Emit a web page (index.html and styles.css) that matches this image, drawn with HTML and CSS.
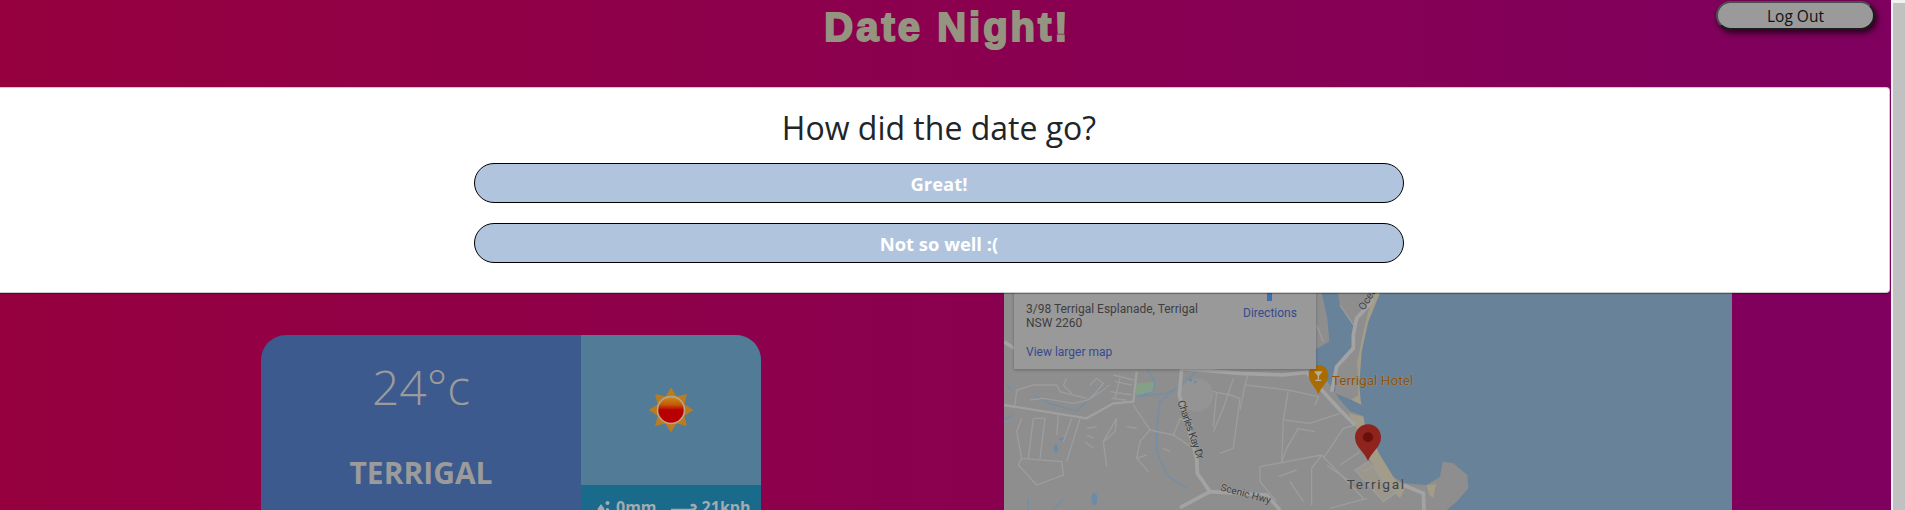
FILE: index.html
```html
<!DOCTYPE html>
<html lang="en">
<head>
  <meta charset="UTF-8" />
  <meta name="viewport" content="width=device-width, initial-scale=1" />
  <title>Date Night!</title>
  <link rel="stylesheet" href="styles.css">
</head>
<body>
  <div class="page">
    <header class="top">
      <h1>Date Night!</h1>
      <button class="logout" type="button">Log Out</button>
    </header>

    <main class="content">
      <section class="weather">
        <div class="weather-main">
          <div class="temp">24°c</div>
          <div class="place">TERRIGAL</div>
        </div>
        <div class="weather-side">
          <div class="sun-box">
            <svg class="sun" width="46" height="46" viewBox="-23 -23 46 46">
              <defs>
                <linearGradient id="sunFill" x1="0" y1="0" x2="0" y2="1">
                  <stop offset="0" stop-color="#c9901e" />
                  <stop offset="0.3" stop-color="#c65a08" />
                  <stop offset="0.5" stop-color="#b80000" />
                  <stop offset="1" stop-color="#b80000" />
                </linearGradient>
              </defs>
              <g fill="#b97c20">
                <path d="M-6.5 -12 L0 -22.5 L6.5 -12Z" />
                <path d="M-6.5 -12 L0 -22.5 L6.5 -12Z" transform="rotate(45)" />
                <path d="M-6.5 -12 L0 -22.5 L6.5 -12Z" transform="rotate(90)" />
                <path d="M-6.5 -12 L0 -22.5 L6.5 -12Z" transform="rotate(135)" />
                <path d="M-6.5 -12 L0 -22.5 L6.5 -12Z" transform="rotate(180)" />
                <path d="M-6.5 -12 L0 -22.5 L6.5 -12Z" transform="rotate(225)" />
                <path d="M-6.5 -12 L0 -22.5 L6.5 -12Z" transform="rotate(270)" />
                <path d="M-6.5 -12 L0 -22.5 L6.5 -12Z" transform="rotate(315)" />
              </g>
              <circle r="13.5" fill="url(#sunFill)" stroke="#b9a690" stroke-width="1.6" />
            </svg>
          </div>
          <div class="stats">
            <svg width="13" height="12" viewBox="0 0 13 12">
              <g fill="#a3abb0">
                <path d="M4 3 C6 6 7.5 7 7.5 9 A3.5 3 0 0 1 .5 9 C.5 7 2.5 5.5 4 3Z" />
                <circle cx="10.5" cy="2" r="2" />
                <circle cx="10.5" cy="8.5" r="1.6" />
              </g>
            </svg>
            <span>0mm</span>
            <svg class="wind" width="26" height="10" viewBox="0 0 26 10">
              <path d="M0 8 H19 C23 8 25 6.5 24.5 4.5 C24 2.8 21.5 2.6 20 4" fill="none" stroke="#a3abb0" stroke-width="2.6" />
            </svg>
            <span>21kph</span>
          </div>
        </div>
      </section>

      <section class="map">
        <svg width="728" height="225" viewBox="12 0 2184 675">
          <rect x="12" y="0" width="2184" height="675" fill="#8e8e8e" />
          <circle cx="590" cy="330" r="50" fill="#949494" />
          <path d="M405 295 L468 290 L455 325 L410 330Z" fill="#84a088" />

          <path class="sand" d="M1150 0 L1125 0 L1090 140 L1072 230 L1075 330 L1052 345 L1080 372 L1100 345 L1090 300 L1095 200 L1115 110Z" />
          <path class="sand" d="M1045 385 L1090 395 L1140 505 L1190 590 L1222 597 L1200 640 L1150 590 L1100 510 L1075 440Z" />
          <path class="sand" d="M1280 600 L1308 598 L1300 640 L1288 630Z" />
          <path class="sand-pale" d="M1065 555 L1105 530 L1185 625 L1150 650Z" />
          <path class="water" d="M1150 0 L1105 110 L1085 200 L1078 300 L1082 345 L1095 420 L1140 510 L1180 575 L1210 595 L1280 600 L1320 575 L1328 530 L1360 535 L1402 570 L1405 610 L1370 650 L1340 675 L2196 675 L2196 0Z" />
          <path class="water" d="M960 0 L982 100 L988 170 L948 192 L948 240 L990 300 L1020 345 L1050 378 L1095 395 L1085 360 L1055 345 L1005 325 L1010 240 L1055 185 L1065 130 L1020 60 L1010 0Z" />

          <g class="streams">
            <path d="M12 405 L40 390 M20 300 L40 320 M100 330 L150 355 L230 380 L290 320 L330 305" />
            <path d="M440 250 L465 290 L460 320 L410 335 L500 325 L530 310 L480 350 L470 430 L470 500 L500 570 L560 610" />
            <path d="M530 310 L590 260 M190 640 L160 675 M85 640 L85 675" />
          </g>
          <g fill="#6b8ba8">
            <ellipse cx="168" cy="490" rx="6" ry="12" />
            <ellipse cx="186" cy="463" rx="9" ry="4" />
            <ellipse cx="283" cy="642" rx="9" ry="19" />
            <circle cx="572" cy="285" r="5" />
            <circle cx="586" cy="291" r="4" />
          </g>

          <g class="roads-thin">
            <path d="M50 315 L100 300 L170 300 L180 320 L260 340 M50 315 L45 360 M90 345 L130 340 L220 355 L265 345 L330 300" />
            <path d="M200 280 L190 300 L215 325 M270 300 L290 280 L310 295 L290 320 L265 345" />
            <path d="M340 270 L400 285 M345 290 L395 300 M330 320 L395 330 M335 340 L380 345 M360 280 L345 340" />
            <path d="M65 400 L50 440 L65 520 L55 540 L110 600 L190 570 L185 530 L65 520 M100 400 L135 400 L120 520 M100 400 L85 520" />
            <path d="M175 390 L170 450 M215 400 L190 470 M240 400 L200 530 M260 430 L290 425 M260 450 L280 460 M255 470 L280 490" />
            <path d="M350 400 L310 470 L320 545 M350 400 L345 440 L310 470" />
            <path d="M400 360 L450 435 L420 470 L410 520 L445 560 M450 435 L520 450 L580 490 M380 425 L410 430 M410 520 L440 510 M490 490 L510 500 M520 450 L540 400 L580 420" />
            <path d="M640 320 L690 330 L720 340 M700 280 L670 370 L640 440 M650 320 L640 425 M720 340 L700 490 L660 505" />
            <path d="M745 265 L735 300 L865 315 L850 405 L930 415 L1020 385 M865 315 L955 335 L945 360 M735 300 L720 375 M850 405 L845 530" />
            <path d="M970 520 L1030 430 L1065 420 M965 510 L780 545 L780 590 L830 650 M965 510 L935 550 L935 660 M965 510 L1090 640" />
            <path d="M890 430 L945 440 M895 430 L860 490 L845 530 M890 555 L835 575 M870 590 L910 650 M1020 540 L1080 500 M980 540 L1050 590 M1100 640 L990 670" />
            <path d="M1020 60 L1060 120 M950 120 L970 170 M1120 440 L1085 500" />
            <path d="M1065 555 L1105 530 L1185 625 L1150 650Z M1090 560 L1120 545 L1165 610" />
          </g>
          <g class="roads">
            <path d="M540 250 L720 265 L850 270 L920 262 L970 320 L1020 375 L1065 420" />
            <path d="M1120 45 L1070 100 L1060 150 L1060 190 L1010 245 L995 320" />
            <path d="M545 250 L538 330 L590 520 L592 565 L630 620 L540 668 M630 620 L800 630 L840 675" />
            <path d="M1210 600 L1270 625 L1272 675" />
            <path d="M12 170 L42 190" />
          </g>
          <path class="road-mid" d="M12 360 L260 400 L340 355 L400 350 L410 260" />

          <text class="road-label" transform="translate(1092 78) rotate(-58)">Ocean</text>
          <text class="road-label" transform="translate(532 350) rotate(71)" textLength="185">Charles Kay Dr</text>
          <text class="road-label scenic" transform="translate(660 616) rotate(15)">Scenic Hwy</text>
          <text class="poi-label" x="995" y="299">Terrigal Hotel</text>
          <text class="town-label" x="1040" y="612">Terrigal</text>

          <path d="M955 240 C972 240 985 253 985 270 C985 292 965 303 955 328 C945 303 926 292 926 270 C926 253 938 240 955 240Z" fill="#a86c00" />
          <path d="M942 259 H968 L957 273 V284 H964 V288 H946 V284 H953 V273Z" fill="#b6ad9b" />
          <path d="M1104 418 C1126 418 1143 435 1143 457 C1143 487 1115 500 1104 528 C1093 500 1065 487 1065 457 C1065 435 1082 418 1104 418Z" fill="#8f231d" />
          <circle cx="1104" cy="457" r="15" fill="#681009" />
        </svg>

        <div class="map-card">
          <div class="map-address">3/98 Terrigal Esplanade, Terrigal<br>NSW 2260</div>
          <a class="map-larger" href="#">View larger map</a>
          <div class="map-directions">
            <span class="dir-icon"></span>
            <a href="#">Directions</a>
          </div>
        </div>
      </section>
    </main>

    <div class="modal">
      <div class="modal-inner">
        <h4>How did the date go?</h4>
        <button class="choice" type="button">Great!</button>
        <button class="choice" type="button">Not so well :(</button>
      </div>
    </div>
  </div>

  <div class="scrollbar"><div class="scrollbar-thumb"></div></div>
</body>
</html>
```

FILE: styles.css
```css
* {
  box-sizing: border-box;
  margin: 0;
  padding: 0;
}

html,
body {
  height: 510px;
  overflow: hidden;
}

body {
  display: flex;
  font-family: "Open Sans", "Noto Sans", sans-serif;
  background-color: #f1f1f1;
}

.page {
  position: relative;
  width: 1891px;
  height: 510px;
  overflow: hidden;
  background: linear-gradient(to right, #96003f, #7f005f);
}

.scrollbar {
  flex: 1;
  padding-top: 3px;
  padding-left: 2px;
}

.scrollbar-thumb {
  height: 507px;
  background-color: #c1c1c1;
}

/* header */
.top {
  position: relative;
  height: 87px;
}

h1 {
  text-align: center;
  padding-top: 4px;
  padding-left: 4px;
  font-family: "Liberation Sans", Arial, sans-serif;
  font-size: 40px;
  font-weight: bold;
  line-height: 46px;
  letter-spacing: 3px;
  color: #949480;
  -webkit-text-stroke: 2px #949480;
}

.logout {
  position: absolute;
  top: 1px;
  left: 1716px;
  width: 159px;
  height: 29px;
  font-family: "Open Sans", sans-serif;
  font-size: 15.5px;
  color: #111;
  background-color: #9a9a9a;
  border: 2px solid;
  border-color: #4d4d4d #1c1c1c #1c1c1c #4d4d4d;
  border-radius: 15px;
  box-shadow: 2px 3px 6px rgba(0, 0, 0, 0.7);
}

/* content under the modal */
.content {
  display: flex;
  align-items: flex-start;
  gap: 243px;
  padding-left: 261px;
}

.weather {
  display: flex;
  width: 500px;
  height: 260px;
  margin-top: 248px;
  border-radius: 25px;
  overflow: hidden;
  color: #9b9b9b;
}

.weather-main {
  width: 320px;
  padding-top: 19px;
  text-align: center;
  background-color: #3c5a8e;
}

.temp {
  font-size: 48px;
  font-weight: 300;
  line-height: 65px;
}

.place {
  margin-top: 35px;
  font-size: 30px;
  font-weight: 700;
  line-height: 38px;
}

.weather-side {
  width: 180px;
  background-color: #1a6a8c;
}

.sun-box {
  display: flex;
  align-items: center;
  justify-content: center;
  height: 150px;
  background-color: #517b96;
}

.stats {
  display: flex;
  align-items: center;
  padding: 11px 0 0 16px;
  font-size: 16px;
  font-weight: 700;
  line-height: 22px;
  color: #a3abb0;
}

.stats span {
  margin-left: 6px;
}

.stats .wind {
  margin-left: 14px;
}

.stats .wind + span {
  margin-left: 5px;
}

/* map */
.map {
  position: relative;
  width: 728px;
  height: 225px;
  margin-top: 198px;
  overflow: hidden;
}

.map svg {
  display: block;
}

.water {
  fill: #678299;
}

.sand {
  fill: #a39c88;
}

.sand-pale {
  fill: #9b978b;
}

.streams {
  fill: none;
  stroke: #6f8fab;
  stroke-width: 3.5;
}

.roads-thin {
  fill: none;
  stroke: #9d9d9d;
  stroke-width: 4;
}

.roads {
  fill: none;
  stroke: #a3a3a3;
  stroke-width: 11;
}

.road-mid {
  fill: none;
  stroke: #a0a0a0;
  stroke-width: 7;
}

.road-label {
  font-family: Roboto, sans-serif;
  font-size: 32px;
  fill: #404040;
  stroke: #9d9d9d;
  stroke-width: 3px;
  paint-order: stroke;
}

.road-label.scenic {
  font-size: 30px;
}

.poi-label {
  font-family: Roboto, sans-serif;
  font-size: 41px;
  fill: #8f5208;
  stroke: #9a9a9a;
  stroke-width: 2px;
  paint-order: stroke;
}

.town-label {
  font-family: Roboto, sans-serif;
  font-size: 41px;
  letter-spacing: 5px;
  fill: #3f4347;
  stroke: #969696;
  stroke-width: 2px;
  paint-order: stroke;
}

.map-card {
  position: absolute;
  top: 0;
  left: 10px;
  width: 302px;
  height: 84px;
  font-family: Roboto, sans-serif;
  font-size: 12px;
  line-height: 14px;
  color: #3e3e3e;
  background-color: #999;
  box-shadow: 0 1px 3px rgba(0, 0, 0, 0.25);
}

.map-card a {
  color: #35498f;
  text-decoration: none;
}

.map-address {
  position: absolute;
  top: 17px;
  left: 12px;
}

.map-larger {
  position: absolute;
  top: 60px;
  left: 12px;
}

.map-directions {
  position: absolute;
  top: 0;
  left: 229px;
  width: 53px;
  text-align: center;
}

.dir-icon {
  display: block;
  width: 5px;
  height: 16px;
  margin: 0 auto 5px;
  background-color: #3f6fb0;
}

/* modal */
.modal {
  position: absolute;
  top: 87px;
  left: 0;
  width: 1890px;
  height: 206px;
  background-color: #fff;
  border: 1px solid rgba(0, 0, 0, 0.2);
  border-left: none;
  border-radius: 0 4px 4px 0;
  box-shadow: 0 1px 1px rgba(0, 0, 0, 0.35);
}

.modal-inner {
  display: flex;
  flex-direction: column;
  gap: 20px;
  width: 930px;
  margin-left: 474px;
}

h4 {
  height: 54px;
  margin-top: 18px;
  margin-bottom: -17px;
  text-align: center;
  font-size: 32px;
  font-weight: 500;
  line-height: 44px;
  color: #212529;
}

.choice {
  height: 40px;
  padding-top: 1px;
  font-family: "Open Sans", sans-serif;
  font-size: 18.4px;
  font-weight: 700;
  color: #fff;
  background-color: #b0c4de;
  border: 1px solid #000;
  border-radius: 20px;
}
```
